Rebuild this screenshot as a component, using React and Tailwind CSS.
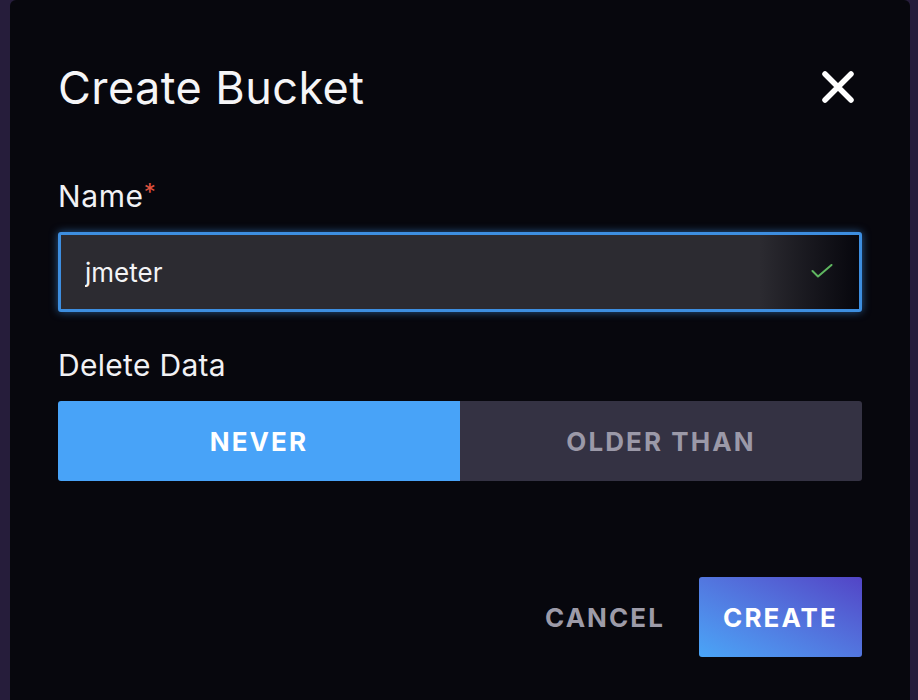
import React, { useState } from 'react'

const font = { fontFamily: 'Inter, Lato, sans-serif' }

const CloseIcon = () => (
  <svg width="34" height="34" viewBox="0 0 34 34" fill="none">
    <path d="M4 4 L30 30 M30 4 L4 30" stroke="#ffffff" strokeWidth="5.5" strokeLinecap="round" />
  </svg>
)

const CheckIcon = () => (
  <svg width="22" height="14" viewBox="0 0 22 14" fill="none">
    <path d="M1.5 7 L7 12.5 L20.5 1" stroke="#5fb760" strokeWidth="2" strokeLinecap="round" strokeLinejoin="round" />
  </svg>
)

const App = () => {
  const [name, setName] = useState('jmeter')
  const [retention, setRetention] = useState('never')

  return (
    <div className="w-[918px] h-[700px] bg-[#261d3b] flex justify-center overflow-hidden" style={font}>
      <div className="w-[900px] h-[700px] ml-[2px] bg-[#07070d] rounded-t-md px-12 pt-[56px] flex flex-col">
        <div className="flex items-center justify-between h-[62px]">
          <h1 className="text-[45px] leading-none tracking-[0.01em] text-[#f5f5f7] font-normal">Create Bucket</h1>
          <button className="mr-[7px]">
            <CloseIcon />
          </button>
        </div>

        <label className="mt-[63px] text-[30px] leading-none tracking-[0.02em] text-[#f1f1f4]">
          Name<span className="text-[#e0533f] align-top text-[24px] leading-none">*</span>
        </label>
        <div className="mt-[21px] h-[80px] rounded-[3px] border-[3px] border-[#3d8ee0] shadow-[0_0_8px_rgba(61,142,224,0.6)] bg-[#2c2b31] flex items-center relative overflow-hidden">
          <input
            className="flex-1 bg-transparent outline-none pl-[24px] text-[26px] text-[#f4f4f6]"
            style={font}
            value={name}
            onChange={e => setName(e.target.value)}
          />
          <div className="absolute right-0 top-0 bottom-0 w-[100px] bg-gradient-to-r from-[#2c2b31] to-[#07070d]" />
          <div className="absolute right-[26px] top-[29px]">
            <CheckIcon />
          </div>
        </div>

        <label className="mt-[38px] text-[30px] leading-none tracking-[0.01em] text-[#f1f1f4]">Delete Data</label>
        <div className="mt-[21px] h-[80px] flex rounded-[3px] overflow-hidden">
          <button
            onClick={() => setRetention('never')}
            className={
              retention === 'never'
                ? 'flex-1 bg-[#48a3f8] text-white text-[26px] font-bold tracking-[0.08em]'
                : 'flex-1 bg-[#343243] text-[#9b99a8] text-[26px] font-bold tracking-[0.08em]'
            }
          >
            NEVER
          </button>
          <button
            onClick={() => setRetention('older')}
            className={
              retention === 'older'
                ? 'flex-1 bg-[#48a3f8] text-white text-[26px] font-bold tracking-[0.08em]'
                : 'flex-1 bg-[#343243] text-[#9b99a8] text-[26px] font-bold tracking-[0.08em]'
            }
          >
            OLDER THAN
          </button>
        </div>

        <div className="mt-[96px] flex justify-end items-center gap-[34px]">
          <button className="text-[26px] font-bold tracking-[0.08em] text-[#9d9ba8]">CANCEL</button>
          <button className="w-[163px] h-[80px] rounded-[3px] bg-gradient-to-tr from-[#49a5f7] to-[#5244c6] text-white text-[26px] font-bold tracking-[0.08em]">
            CREATE
          </button>
        </div>
      </div>
    </div>
  )
}

export default App
